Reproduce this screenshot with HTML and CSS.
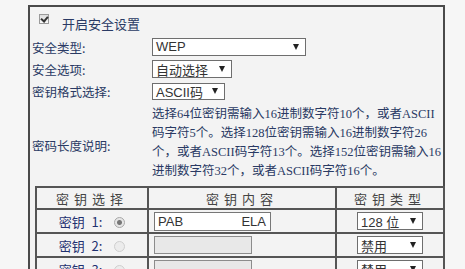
FILE: index.html
```html
<!DOCTYPE html>
<html lang="zh-CN">

<head>
  <meta charset="UTF-8">
  <title>无线安全设置</title>
  <link rel="stylesheet" href="styles.css">
</head>

<body>
  <div class="panel">
    <div class="enable">
      <span class="check"></span>
      <span class="enable-text">开启安全设置</span>
    </div>

    <div class="form">
      <div class="label">安全类型:</div>
      <div class="field">
        <div class="select wide"><span>WEP</span><i class="arrow"></i></div>
      </div>

      <div class="label">安全选项:</div>
      <div class="field">
        <div class="select mode"><span>自动选择</span><i class="arrow"></i></div>
      </div>

      <div class="label">密钥格式选择:</div>
      <div class="field">
        <div class="select fmt"><span>ASCII码</span><i class="arrow"></i></div>
      </div>

      <div class="label desc-label">密码长度说明:</div>
      <div class="desc">
        选择64位密钥需输入16进制数字符10个，或者ASCII<br>
        码字符5个。选择128位密钥需输入16进制数字符26<br>
        个，或者ASCII码字符13个。选择152位密钥需输入16<br>
        进制数字符32个，或者ASCII码字符16个。
      </div>
    </div>

    <table class="keys">
      <tr class="head">
        <th class="c1">密钥选择</th>
        <th class="c2">密钥内容</th>
        <th class="c3">密钥类型</th>
      </tr>
      <tr>
        <td class="c1"><span class="kname">密钥 1:</span><span class="radio on"></span></td>
        <td class="c2"><div class="key"><span>PAB</span><span class="tail">ELA</span></div></td>
        <td class="c3"><div class="select ktype"><span>128 位</span><i class="arrow"></i></div></td>
      </tr>
      <tr>
        <td class="c1"><span class="kname">密钥 2:</span><span class="radio"></span></td>
        <td class="c2"><div class="key off"></div></td>
        <td class="c3"><div class="select ktype"><span>禁用</span><i class="arrow"></i></div></td>
      </tr>
      <tr>
        <td class="c1"><span class="kname">密钥 3:</span><span class="radio"></span></td>
        <td class="c2"><div class="key off"></div></td>
        <td class="c3"><div class="select ktype"><span>禁用</span><i class="arrow"></i></div></td>
      </tr>
    </table>
  </div>
</body>

</html>
```

FILE: styles.css
```css
body {
  margin: 0;
  overflow: hidden;
  background-color: #f6f6f6;
  font-family: "Noto Sans CJK SC", "Liberation Sans", sans-serif;
  font-size: 13px;
  color: #2a3a64;
}

.panel {
  box-sizing: border-box;
  width: 417px;
  height: 320px;
  margin: 5px 0 0 28px;
  border: 2px solid #4a4a4a;
  background-color: #f3f3f3;
  padding: 0 0 0 2px;
}

.enable {
  height: 28px;
  display: flex;
  align-items: center;
  padding-left: 7px;
}

.check {
  box-sizing: border-box;
  width: 10px;
  height: 10px;
  margin-top: -5px;
  border: 1px solid #9a9a9a;
  background: linear-gradient(#dcdcdc, #fafafa);
  position: relative;
}

.check::after {
  content: "";
  position: absolute;
  left: 2px;
  top: 0px;
  width: 3px;
  height: 5px;
  border: solid #333;
  border-width: 0 2px 2px 0;
  transform: rotate(40deg);
}

.enable-text {
  margin-left: 13px;
  margin-top: 4px;
}

.form {
  display: grid;
  grid-template-columns: 120px 1fr;
  grid-template-rows: 23px 22px 22px auto;
}

.label {
  display: flex;
  align-items: center;
  padding-top: 1px;
  font-size: 12.5px;
}

.field {
  display: flex;
  align-items: center;
}

.select {
  box-sizing: border-box;
  height: 18px;
  border: 1px solid #6e6e6e;
  background-color: #fff;
  display: flex;
  align-items: center;
  padding-left: 3px;
  color: #333;
  font-family: "Liberation Sans", "Noto Sans CJK SC", sans-serif;
  font-size: 13px;
}

.select span {
  flex: 1;
}

.arrow {
  width: 0;
  height: 0;
  margin-right: 6px;
  border-left: 3px solid transparent;
  border-right: 3px solid transparent;
  border-top: 6px solid #222;
}

.wide {
  width: 154px;
}

.mode {
  width: 80px;
}

.fmt {
  width: 73px;
  height: 17px;
}

.desc-label {
  padding-top: 8px;
}

.desc {
  margin-top: 3px;
  line-height: 19px;
  white-space: nowrap;
  font-family: "Liberation Serif", "Noto Sans CJK SC", serif;
  font-size: 12.5px;
  color: #2a3a64;
}

.keys {
  width: 410px;
  margin: 5px 0 0 3px;
  border-collapse: collapse;
  border: 2px solid #555;
}

.keys th,
.keys td {
  border: 2px solid #555;
  padding: 0;
}

.keys th {
  height: 20px;
  font-weight: normal;
  letter-spacing: 5px;
  color: #444;
}

.keys td {
  height: 22px;
}

.c1 {
  width: 110px;
  text-align: center;
}

.c2 {
  width: 186px;
}

.c3 {
  text-align: center;
}

td.c1 {
  color: #1f3170;
}

.kname {
  display: inline-block;
  word-spacing: 4px;
}

.radio {
  display: inline-block;
  box-sizing: border-box;
  width: 11px;
  height: 11px;
  margin-left: 12px;
  vertical-align: -1px;
  border-radius: 50%;
  border: 1px solid #cfcfcf;
  background-color: #ececec;
}

.radio.on {
  border-color: #a8a8a8;
  background: radial-gradient(circle, #777 0 2px, #e6e6e6 3px);
}

.key {
  box-sizing: border-box;
  width: 117px;
  height: 19px;
  margin-left: 5px;
  border: 1px solid #777;
  background-color: #fff;
  display: flex;
  align-items: center;
  padding: 0 4px 0 3px;
  color: #333;
  font-family: "Liberation Sans", sans-serif;
}

.key span {
  flex: 1;
}

.key .tail {
  flex: none;
}

.key.off {
  width: 98px;
  height: 18px;
  border-color: #8c8c8c;
  background-color: #e8e8e8;
}

.ktype {
  width: 66px;
  margin-left: 20px;
  text-align: left;
}
```
